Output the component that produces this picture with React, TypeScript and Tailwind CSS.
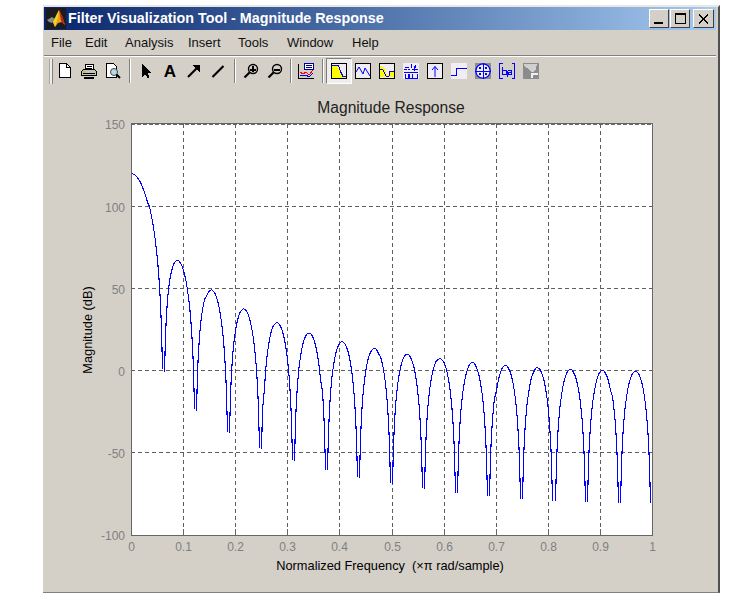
import React from "react";

const F = '"Liberation Sans", Arial, sans-serif';

function curvePaths() {
  const N = 32;
  const segs: string[] = [];
  let cur = "";
  for (let k = 0; k <= 512; k++) {
    if (k > 0 && k % 32 === 0) {
      if (cur) segs.push(cur);
      cur = "";
      continue;
    }
    const f = k / 512;
    const w = Math.PI * f;
    const d = k === 0 ? 1 : Math.abs(Math.sin((N * w) / 2) / (N * Math.sin(w / 2)));
    const db = 120 + 80 * Math.log10(d);
    const x = Math.round(130.2 + 521 * f) + 0.5;
    const y = Math.round(370 - db * 1.644) + 0.5;
    cur += (cur ? "L" : "M") + x + " " + y;
  }
  if (cur) segs.push(cur);
  return segs.join("");
}

const X0 = 131, X1 = 652, Y0 = 124, Y1 = 535;

function Chart() {
  const xs = [0, 0.1, 0.2, 0.3, 0.4, 0.5, 0.6, 0.7, 0.8, 0.9, 1];
  const ys = [150, 100, 50, 0, -50, -100];
  const px = (f: number) => Math.round(X0 + (X1 - X0) * f) + 0.5;
  const py = (v: number) => Math.round(370 - v * 1.644) + 0.5;
  return (
    <svg width={672} height={505} viewBox="44 85 672 505" className="block" style={{ fontFamily: F }}>
      <rect x={X0} y={Y0} width={X1 - X0} height={Y1 - Y0} fill="#fff" />
      <g stroke="#5f5f5f" strokeWidth={1} strokeDasharray="4 3" shapeRendering="crispEdges">
        {xs.slice(1, -1).map((f) => <line key={f} x1={px(f)} x2={px(f)} y1={Y0} y2={Y1} />)}
        {ys.slice(1, -1).map((v) => <line key={v} y1={py(v)} y2={py(v)} x1={X0} x2={X1} />)}
      </g>
      <path d={curvePaths()} fill="none" stroke="#0000ff" strokeWidth={1.1} strokeLinejoin="bevel" shapeRendering="crispEdges" />
      <g stroke="#666" strokeWidth={1} shapeRendering="crispEdges" fill="none">
        <rect x={X0 + 0.5} y={Y0 - 0.5} width={X1 - X0} height={Y1 - Y0 + 1} />
        <line x1={X0} x2={X1} y1={Y0 + 0.5} y2={Y0 + 0.5} strokeDasharray="4 2" />
        {xs.slice(1, -1).map((f) => <line key={f} x1={px(f)} x2={px(f)} y1={Y1 - 6} y2={Y1} />)}
      </g>
      <g fill="#808080" fontSize={12}>
        {ys.map((v) => <text key={v} x={125} y={py(v) + 5} textAnchor="end">{v}</text>)}
        {xs.map((f) => <text key={f} x={px(f)} y={551} textAnchor="middle">{f}</text>)}
      </g>
      <g fill="#000">
        <text x={391} y={113} textAnchor="middle" fontSize={15.6} fill="#222">Magnitude Response</text>
        <text x={390} y={570} textAnchor="middle" fontSize={12.8} xmlSpace="preserve">Normalized Frequency  (×π rad/sample)</text>
        <text transform="translate(92 330) rotate(-90)" textAnchor="middle" fontSize={12.8}>Magnitude (dB)</text>
      </g>
    </svg>
  );
}

function MatlabLogo() {
  return (
    <svg width={20} height={21} viewBox="0 0 20 21" className="shrink-0">
      <rect width={20} height={21} fill="#1c1c20" />
      <path d="M1 12 L6 9 L9 11 L6 15 L3 14Z" fill="#8a8a8a" />
      <path d="M7 14 L13 2 L16 8 L19 17 L16 14 L12 15 L9 19Z" fill="#e8a020" />
      <path d="M7 14 L13 2 L12 9 L9 19Z" fill="#e8d820" />
      <path d="M13 2 L16 8 L19 17 L15 13 Z" fill="#c02010" />
    </svg>
  );
}

function WinBtn({ children, cls }: { children: React.ReactNode; cls: string }) {
  return (
    <div className={`h-[19px] bg-[#d4d0c8] border border-t-white border-l-white border-r-[#404040] border-b-[#404040] flex items-center justify-center ${cls}`}>
      {children}
    </div>
  );
}

function TitleBar() {
  return (
    <div className="h-[23px] flex items-center bg-gradient-to-r from-[#0a246a] to-[#a6caf0] pl-[2px] pr-[2px]">
      <MatlabLogo />
      <span className="ml-[2px] text-white font-bold text-[14.3px] leading-none whitespace-pre flex-1" style={{ fontFamily: F }}>
        Filter Visualization Tool - Magnitude Response
      </span>
      <WinBtn cls="w-[20px]">
        <div className="w-[9px] h-[2px] bg-black mt-[9px] -ml-[1px]" />
      </WinBtn>
      <WinBtn cls="w-[20px] ml-[1px]">
        <div className="w-[11px] h-[11px] border border-black border-t-2" />
      </WinBtn>
      <WinBtn cls="w-[21px] ml-[3px]">
        <svg width={11} height={10} viewBox="0 0 11 10" shapeRendering="crispEdges">
          <path d="M1 0.5 L10 9.5 M10 0.5 L1 9.5" stroke="#000" strokeWidth={2} />
        </svg>
      </WinBtn>
    </div>
  );
}

function Menu() {
  const items: [string, string][] = [
    ["File", "w-[34px]"], ["Edit", "w-[40px]"], ["Analysis", "w-[63px]"], ["Insert", "w-[50px]"],
    ["Tools", "w-[49px]"], ["Window", "w-[65px]"], ["Help", "w-[40px]"],
  ];
  return (
    <div className="h-[25px] flex items-center pl-[7px] text-[13px] text-[#111]" style={{ fontFamily: F }}>
      {items.map(([t, w]) => <span key={t} className={w}>{t}</span>)}
    </div>
  );
}

const Ic = ({ children }: { children: React.ReactNode }) => (
  <div className="w-[24px] h-[24px] flex items-center justify-center shrink-0">
    <svg width={16} height={16} viewBox="0 0 16 16" fill="none" shapeRendering="crispEdges" className="overflow-visible">{children}</svg>
  </div>
);

const Sep = ({ cls }: { cls: string }) => (
  <div className={`h-[24px] flex justify-center shrink-0 ${cls}`}>
    <div className="w-[2px] h-full border-l border-l-[#808080] border-r border-r-white" />
  </div>
);

const Mag = ({ sign }: { sign: "+" | "-" }) => (
  <>
    <circle cx={10} cy={6} r={4.5} stroke="#000" strokeWidth={1.4} shapeRendering="auto" />
    <path d="M7 6.5H13" stroke="#000" strokeWidth={2} />
    {sign === "+" && <path d="M10 3V9" stroke="#000" strokeWidth={2} />}
    <path d="M6.5 9.5L1.5 14.5" stroke="#000" strokeWidth={2.2} shapeRendering="auto" />
  </>
);

const B = "#0000ff";

function Toolbar() {
  return (
    <div className="h-[28px] flex items-center pl-[5px]">
      <div className="w-[4px] h-[25px] bg-[#eeeeec] border-l border-l-[#a8a6a2] border-r border-r-[#808080] shrink-0" />
      <Ic>
        <path d="M2.5 .5H9.5L13.5 4.5V14.5H2.5Z" fill="#fff" stroke="#000" />
        <path d="M9.5 .5V4.5H13.5" stroke="#000" />
      </Ic>
      <Ic>
        <path d="M4 1.5H12V7H4Z" fill="#fff" stroke="#000" />
        <path d="M0.5 8.5L3 6H13L15.5 8.5V12.5H0.5Z" fill="#c8c4bc" stroke="#000" />
        <path d="M3 14.5H13" stroke="#000" strokeWidth={2} />
        <path d="M2 10.5H14" stroke="#000" />
        <path d="M5.5 3.5H11M5 5.5H11" stroke="#000" />
        <path d="M2 9H4" stroke="#d8c000" strokeWidth={1.5} />
      </Ic>
      <Ic>
        <path d="M1.5 .5H8.5L11.5 3.5V14.5H1.5Z" fill="#fff" stroke="#000" />
        <circle cx={9} cy={9} r={3.5} fill="#b8d8e8" stroke="#404040" shapeRendering="auto" />
        <path d="M11.5 11.5L15 15" stroke="#000" strokeWidth={2} shapeRendering="auto" />
      </Ic>
      <Sep cls="w-[9px]" />
      <Ic><path d="M4 1V14L7 11L9.5 15L11.5 14L9.5 10H13Z" fill="#000" /></Ic>
      <Ic><text x={8} y={14} textAnchor="middle" fontSize={17} fontWeight={700} fill="#000" shapeRendering="auto" style={{ fontFamily: F }}>A</text></Ic>
      <Ic>
        <path d="M2 14L12 4" stroke="#000" strokeWidth={2.2} shapeRendering="auto" />
        <path d="M6.5 2H14V9.5Z" fill="#000" />
      </Ic>
      <Ic><path d="M2.5 14L13.5 3" stroke="#000" strokeWidth={2.2} shapeRendering="auto" /></Ic>
      <Sep cls="w-[9px]" />
      <Ic><Mag sign="+" /></Ic>
      <Ic><Mag sign="-" /></Ic>
      <Sep cls="w-[7px]" />
      <Ic>
        <path d="M.5 .5V15.5H16" stroke="#000" />
        <rect x={6.5} y={.5} width={9} height={6} fill="#fff" stroke="#0000a0" />
        <path d="M8 2.5H14M8 4.5H14" stroke="#000080" />
        <path d="M2 9L5 11L8 9L11 12L15 7" stroke="#ff0000" />
        <path d="M2 12L5 13L8 12L11 14L15 10" stroke="#0000ff" />
      </Ic>
      <Sep cls="w-[9px]" />
      <div className="w-[26px] h-[26px] -mx-[1px] bg-[#f0eeec] border border-t-[#808080] border-l-[#808080] border-r-white border-b-white flex items-center justify-center shrink-0">
        <svg width={16} height={16} viewBox="0 0 16 16" fill="none" shapeRendering="crispEdges">
          <rect x={.5} y={.5} width={15} height={15} fill="#f0eef4" stroke="#000" />
          <path d="M1 2H7L9 8L12 14H15V15H1Z" fill="#ffff00" />
          <path d="M1 2.5H7.5L9.5 8.5L12 13.5H15" stroke={B} />
        </svg>
      </div>
      <Ic>
        <rect x={.5} y={.5} width={15} height={15} fill="#f0eef4" stroke="#000" />
        <path d="M1 9L4 4L8 11L10 5L15 13" stroke={B} shapeRendering="auto" />
      </Ic>
      <Ic>
        <rect x={.5} y={.5} width={15} height={15} fill="#f0eef4" stroke="#000" />
        <path d="M1 3L5 4L8 12L11 13L10 9L15 7V14H1Z" fill="#ffff00" />
        <path d="M1 6L4 7L7 13L10 13L11 8H15" stroke={B} />
      </Ic>
      <Ic>
        <rect x={0} y={0} width={16} height={16} fill="#f0eef4" />
        <path d="M1 6H4M5 6H7M9 6H15M1 9.5H15" stroke={B} />
        <path d="M8 1V5M11 3V8M12 2V5" stroke={B} />
        <path d="M2 11V15H5V11M6 11V15H9V11M10 15H14V11M2 4H6" stroke={B} />
      </Ic>
      <Ic>
        <rect x={.5} y={.5} width={15} height={15} fill="#f0eef4" stroke="#000" />
        <path d="M8 3.5V14M5 7L8 3.5L11 7" stroke={B} shapeRendering="auto" />
      </Ic>
      <Ic>
        <rect x={0} y={0} width={16} height={16} fill="#f0eef4" />
        <path d="M0 12.5H5.5V5.5H16" stroke={B} />
      </Ic>
      <Ic>
        <rect x={0} y={0} width={16} height={16} fill="#8c8c8c" />
        <circle cx={8} cy={8} r={7.2} fill="#f0eef4" stroke={B} strokeWidth={1.3} shapeRendering="auto" />
        <path d="M8 0V16M0 8H16" stroke={B} />
        <path d="M4 4L6 6M6 4L4 6M10 4L12 6M12 4L10 6M4 10L6 12M6 10L4 12M10 10L12 12M12 10L10 12" stroke={B} />
      </Ic>
      <Ic>
        <path d="M3.5 .5H.5V15.5H3.5M12.5 .5H15.5V15.5H12.5" stroke={B} />
        <path d="M3.5 4V11.5H7V7H3.5M9 7.5H12V11.5H9V9.5H12" stroke={B} />
        <path d="M8 8V14" stroke={B} />
      </Ic>
      <Ic>
        <rect x={0} y={0} width={16} height={16} fill="#8c8c8c" />
        <path d="M1 1H14L13 6L11 9H8L6 6L1 3Z" fill="#cfcfcf" />
        <path d="M8 10H15V12H10V15H8Z" fill="#f0f0f0" />
      </Ic>
    </div>
  );
}

export default function App() {
  return (
    <div className="w-[741px] h-[594px] bg-white overflow-hidden pt-[5px] pl-[43px]">
      <div className="w-[677px] h-[588px] bg-[#d4d0c8] border-t-2 border-t-[#e9e7e3] border-r-2 border-r-[#505050] border-b border-b-[#808080] pl-[1px] pr-[2px] flex flex-col">
        <TitleBar />
        <Menu />
        <div className="h-[2px] border-t border-t-[#808080] border-b border-b-white shrink-0" />
        <Toolbar />
        <Chart />
      </div>
    </div>
  );
}
